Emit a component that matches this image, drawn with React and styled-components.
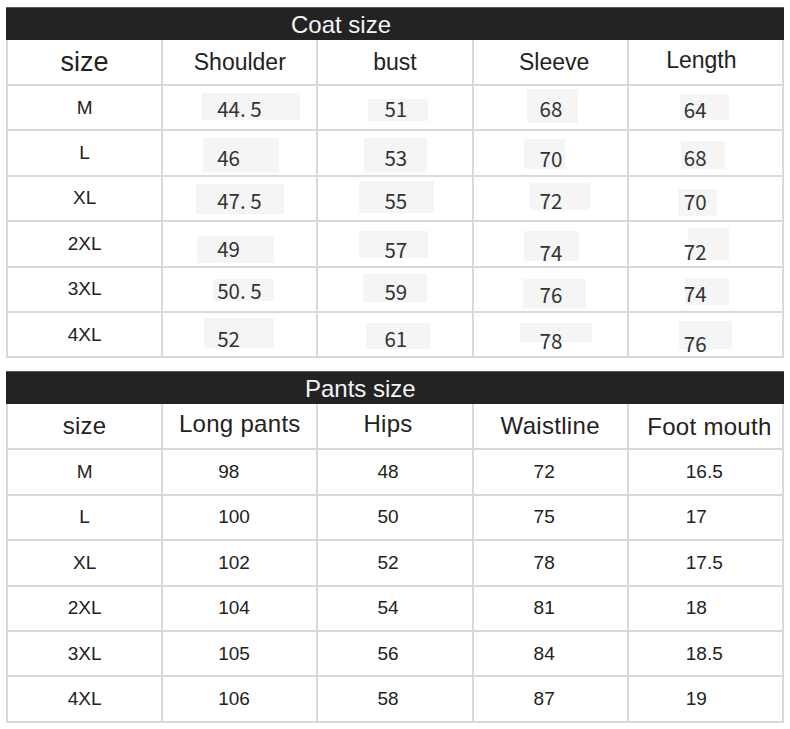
import React from 'react';
import styled, { createGlobalStyle } from 'styled-components';

const GlobalStyle = createGlobalStyle`
  body {
    margin: 0;
    background: #ffffff;
    font-family: "Liberation Sans", Arial, sans-serif;
  }
`;

const Page = styled.div`
  display: flex;
  flex-direction: column;
  gap: 13px;
  width: 778px;
  padding: 7px 0 0 6px;
`;

const Chart = styled.section`
  display: flex;
  flex-direction: column;
`;

const TitleBar = styled.div`
  height: 33px;
  line-height: 33px;
  background: #232323;
  border-top: 1px solid #5a5a5a;
  box-sizing: border-box;
  color: #f4f4f4;
  font-size: 24px;
  padding-left: ${p => p.$indent}px;
`;

const Grid = styled.div`
  display: grid;
  grid-template-columns: repeat(5, 1fr);
  grid-template-rows: 44px repeat(6, 43.4px);
  gap: 2px;
  background: #d9d9d9;
  border: 2px solid #d9d9d9;
  border-top: none;
`;

const HeadCell = styled.div`
  background: #ffffff;
  display: flex;
  align-items: center;
  justify-content: center;
  color: #222222;
  font-size: ${p => (p.$big ? 27 : p.$size)}px;
  letter-spacing: ${p => (p.$size > 23 ? '0.3px' : '0')};

  span {
    transform: translate(${p => p.$dx || 0}px, ${p => p.$dy || 0}px);
  }
`;

const Cell = styled.div`
  position: relative;
  background: #ffffff;
  display: flex;
  align-items: center;
  justify-content: ${p => (p.$pad ? 'flex-start' : 'center')};
  padding-left: ${p => p.$pad || 0}px;
  color: #2a2a2a;
`;

const SizeLabel = styled.span`
  font-size: 19px;
  color: #222222;
`;

// light grey box left behind each pasted number in the coat chart
const Patch = styled.span`
  position: absolute;
  background: #f5f5f5;
`;

const CoatValue = styled.span`
  position: relative;
  font-family: "Noto Sans CJK SC", "Noto Sans", sans-serif;
  font-size: 20.5px;
  color: #333333;
`;

const PantsValue = styled.span`
  font-size: 19px;
  color: #222222;
`;

const sizes = ['M', 'L', 'XL', '2XL', '3XL', '4XL'];

const coatPads = [0, 54, 66, 66, 55];
const coatHeads = [['size', 0, 0], ['Shoulder', 0, 0], ['bust', 0, 0], ['Sleeve', 4, 0], ['Length', -4, -2]];

// [text, patch left (from text), patch width, patch top (from row top), patch height, text shift]
const coatRows = [
  [['44. 5', -15, 98, 7, 27, 0], ['51', -16, 60, 13, 22, 0], ['68', -13, 51, 3, 34, 0], ['64', -4, 49, 8, 26, 1]],
  [['46', -14, 76, 7, 34, 4], ['53', -20, 63, 7, 34, 4], ['70', -16, 41, 8, 30, 5], ['68', -3, 44, 10, 28, 4]],
  [['47. 5', -21, 88, 7, 30, 2], ['55', -25, 75, 4, 32, 2], ['72', -10, 60, 6, 27, 2], ['70', -6, 39, 12, 27, 3]],
  [['49', -20, 77, 14, 27, 4], ['57', -25, 69, 9, 27, 5], ['74', -16, 55, 9, 30, 8], ['72', 4, 41, 6, 32, 7]],
  [['50. 5', -4, 61, 11, 22, 1], ['59', -21, 64, 6, 28, 2], ['76', -17, 63, 11, 29, 5], ['74', 1, 44, 10, 27, 4]],
  [['52', -13, 70, 5, 30, 3], ['61', -18, 64, 10, 26, 3], ['78', -20, 72, 10, 19, 5], ['76', -5, 53, 8, 28, 8]],
];

const pantsPads = [0, 55, 59, 60, 57];
const pantsHeads = [['size', 0, 0], ['Long pants', 0, -2], ['Hips', -7, -2], ['Waistline', 0, 0], ['Foot mouth', 4, 1]];
const pantsRows = [
  ['98', '48', '72', '16.5'],
  ['100', '50', '75', '17'],
  ['102', '52', '78', '17.5'],
  ['104', '54', '81', '18'],
  ['105', '56', '84', '18.5'],
  ['106', '58', '87', '19'],
];

function CoatChart() {
  return (
    <Chart>
      <TitleBar $indent={285}>Coat size</TitleBar>
      <Grid>
        {coatHeads.map(([h, dx, dy], i) => (
          <HeadCell key={h} $big={i === 0} $size={23} $dx={dx} $dy={dy}>
            <span>{h}</span>
          </HeadCell>
        ))}
        {coatRows.map((row, r) => (
          <React.Fragment key={sizes[r]}>
            <Cell>
              <SizeLabel>{sizes[r]}</SizeLabel>
            </Cell>
            {row.map(([v, l, w, t, h, dy], c) => (
              <Cell key={c} $pad={coatPads[c + 1]}>
                <Patch
                  style={{ left: coatPads[c + 1] + l, width: w, top: t, height: h }}
                />
                <CoatValue style={{ top: dy }}>{v}</CoatValue>
              </Cell>
            ))}
          </React.Fragment>
        ))}
      </Grid>
    </Chart>
  );
}

function PantsChart() {
  return (
    <Chart>
      <TitleBar $indent={299}>Pants size</TitleBar>
      <Grid>
        {pantsHeads.map(([h, dx, dy]) => (
          <HeadCell key={h} $size={24} $dx={dx} $dy={dy}>
            <span>{h}</span>
          </HeadCell>
        ))}
        {pantsRows.map((row, r) => (
          <React.Fragment key={sizes[r]}>
            <Cell>
              <SizeLabel>{sizes[r]}</SizeLabel>
            </Cell>
            {row.map((v, c) => (
              <Cell key={c} $pad={pantsPads[c + 1]}>
                <PantsValue>{v}</PantsValue>
              </Cell>
            ))}
          </React.Fragment>
        ))}
      </Grid>
    </Chart>
  );
}

export default function App() {
  return (
    <>
      <GlobalStyle />
      <Page>
        <CoatChart />
        <PantsChart />
      </Page>
    </>
  );
}
